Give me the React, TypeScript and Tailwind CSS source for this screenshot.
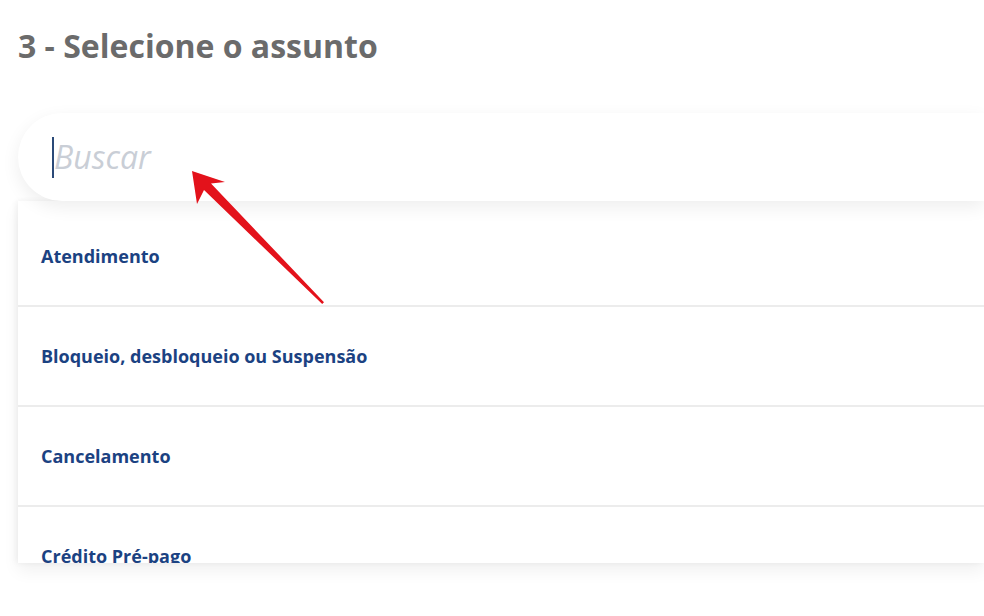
export default function App() {
  const items = ["Atendimento", "Bloqueio, desbloqueio ou Suspensão", "Cancelamento", "Crédito Pré-pago"];

  return (
    <div className="relative w-[984px] h-[616px] overflow-hidden bg-white" style={{ fontFamily: '"Open Sans", "Noto Sans", sans-serif' }}>
      <h1 className="pl-[18px] pt-[26px] text-[32px] leading-[40px] font-bold text-[#6b6b6b]">3 - Selecione o assunto</h1>

      <div className="ml-[18px] mt-[47px]">
        {/* search box */}
        <div className="relative z-10 h-[88px] bg-white rounded-l-[44px] shadow-[0_6px_18px_rgba(0,0,0,0.07)] flex items-center pl-[34px]">
          <div className="w-[2px] h-[41px] bg-[#2b4a78]" />
          <span className="text-[32px] italic text-[#c9ced6] leading-none">Buscar</span>
        </div>

        {/* options list */}
        <div className="h-[362px] overflow-hidden bg-white pt-[6px] shadow-[0_8px_16px_rgba(0,0,0,0.06),-2px_0_6px_rgba(0,0,0,0.05)]">
          {items.map((item) => (
            <div key={item} className="h-[100px] border-b-2 border-[#ececec] flex items-center pl-[23px]">
              <span className="text-[18px] font-bold text-[#1b4282]">{item}</span>
            </div>
          ))}
        </div>
      </div>

      {/* red annotation arrow */}
      <svg className="absolute inset-0 pointer-events-none z-20" width="984" height="616" viewBox="0 0 984 616">
        <polygon
          points="192,171 225,182 211,183.5 324,302.2 322.2,304 204,190 197,204"
          fill="#e3121b"
        />
      </svg>
    </div>
  );
}
